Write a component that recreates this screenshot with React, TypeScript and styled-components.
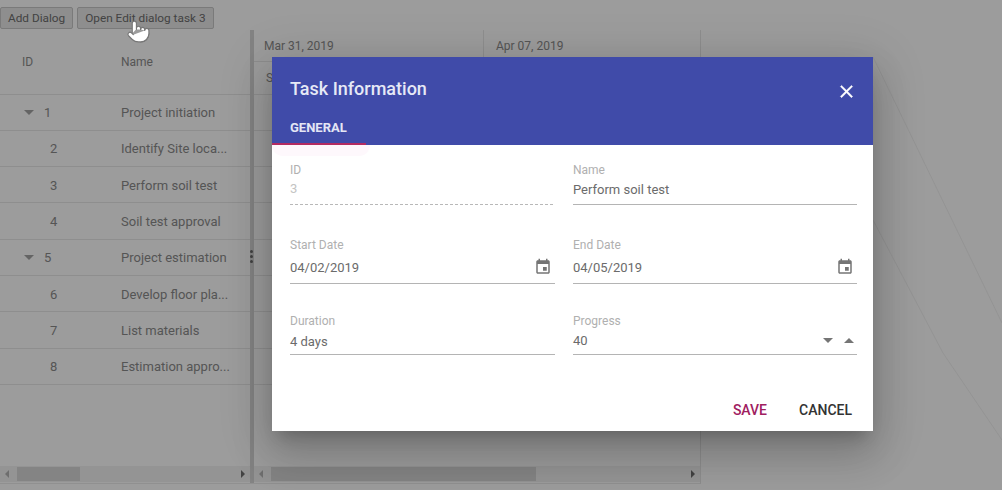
import styled, { createGlobalStyle } from 'styled-components';
import { Pointer } from 'lucide-react';

const tasks = [
  { id: 1, name: 'Project initiation', parent: true },
  { id: 2, name: 'Identify Site loca...' },
  { id: 3, name: 'Perform soil test' },
  { id: 4, name: 'Soil test approval' },
  { id: 5, name: 'Project estimation', parent: true },
  { id: 6, name: 'Develop floor pla...' },
  { id: 7, name: 'List materials' },
  { id: 8, name: 'Estimation appro...' },
];

const EventIcon = () => (
  <svg width="18" height="18" viewBox="0 0 24 24" fill="#757575">
    <path d="M17 12h-5v5h5v-5zM16 1v2H8V1H6v2H5c-1.11 0-1.99.9-1.99 2L3 19c0 1.1.89 2 2 2h14c1.1 0 2-.9 2-2V5c0-1.1-.9-2-2-2h-1V1h-2zm3 18H5V8h14v11z" />
  </svg>
);

const CloseIcon = () => (
  <svg width="21" height="21" viewBox="0 0 24 24" fill="#fff" stroke="#fff" strokeWidth="0.5">
    <path d="M19 6.41L17.59 5 12 10.59 6.41 5 5 6.41 10.59 12 5 17.59 6.41 19 12 13.41 17.59 19 19 17.59 13.41 12z" />
  </svg>
);

const Scrollbar = ({ thumbWidth }: { thumbWidth: number }) => (
  <ScrollTrack>
    <ScrollArrow $dir="left" />
    <ScrollThumb style={{ width: thumbWidth }} />
    <ScrollArrow $dir="right" />
  </ScrollTrack>
);

export default function App() {
  return (
    <Page>
      <GlobalStyle />
      <Toolbar>
        <ToolButton>Add Dialog</ToolButton>
        <ToolButton>Open Edit dialog task 3</ToolButton>
      </Toolbar>
      <Gantt>
        <GridPane>
          <GridHeader>
            <IdHeader>ID</IdHeader>
            <NameHeader>Name</NameHeader>
          </GridHeader>
          {tasks.map((t) => (
            <Row key={t.id}>
              <IdCell>
                {t.parent && <Caret />}
                <IdValue $parent={!!t.parent}>{t.id}</IdValue>
              </IdCell>
              <span>{t.name}</span>
            </Row>
          ))}
          <Filler />
          <Scrollbar thumbWidth={63} />
        </GridPane>
        <Splitter>
          <Kebab>
            <i />
            <i />
            <i />
          </Kebab>
        </Splitter>
        <ChartPane>
          <WeekRow>
            <WeekCell>Mar 31, 2019</WeekCell>
            <WeekCell>Apr 07, 2019</WeekCell>
          </WeekRow>
          <DayRow>S</DayRow>
          {tasks.map((t) => (
            <ChartRow key={t.id} />
          ))}
          <Filler />
          <Scrollbar thumbWidth={265} />
        </ChartPane>
      </Gantt>

      <Overlay>
        <Connectors viewBox="0 0 1002 490">
          <polyline points="873,57 1002,323" />
          <polyline points="873,220 903,277 943,353 1002,440" />
        </Connectors>
      </Overlay>

      <Dialog>
        <DialogHeader>
          <TitleRow>
            <Title>Task Information</Title>
            <CloseButton>
              <CloseIcon />
            </CloseButton>
          </TitleRow>
          <Tab>GENERAL</Tab>
        </DialogHeader>
        <TabRipple />
        <Form>
          <Field $height={42} $width={263}>
            <Label>ID</Label>
            <DisabledValue $lift={4}>3</DisabledValue>
          </Field>
          <Field $height={42}>
            <Label>Name</Label>
            <Value $lift={3}>Perform soil test</Value>
          </Field>
          <Field $height={46}>
            <Label>Start Date</Label>
            <Value $lift={1}>
              04/02/2019
              <EventIcon />
            </Value>
          </Field>
          <Field $height={46}>
            <Label>End Date</Label>
            <Value $lift={1}>
              04/05/2019
              <EventIcon />
            </Value>
          </Field>
          <Field $height={41}>
            <Label>Duration</Label>
            <Value>4 days</Value>
          </Field>
          <Field $height={41}>
            <Label>Progress</Label>
            <Value $lift={1}>
              40
              <Spinner>
                <Triangle $up={false} />
                <Triangle $up />
              </Spinner>
            </Value>
          </Field>
        </Form>
        <Actions>
          <ActionButton $primary>SAVE</ActionButton>
          <ActionButton>CANCEL</ActionButton>
        </Actions>
      </Dialog>

      <HandCursor>
        <Pointer size={25} fill="#fff" color="#777" strokeWidth={1.1} />
      </HandCursor>
    </Page>
  );
}

const GlobalStyle = createGlobalStyle`
  html, body {
    margin: 0;
    padding: 0;
    background: #fff;
  }
  * {
    box-sizing: border-box;
  }
`;

const Page = styled.div`
  position: relative;
  width: 1002px;
  height: 490px;
  overflow: hidden;
  background: #fff;
  font-family: Roboto, 'Liberation Sans', sans-serif;
  color: #8c8c8c;
`;

const Toolbar = styled.div`
  display: flex;
  gap: 4px;
  height: 30px;
  padding-top: 7px;
`;

const ToolButton = styled.div`
  display: flex;
  align-items: center;
  height: 22px;
  padding: 0 7px;
  background: #e8e8e8;
  border: 1px solid #c8c8c8;
  border-radius: 2px;
  font-size: 11.8px;
  color: #6e6e6e;
`;

const Gantt = styled.div`
  display: flex;
  width: 701px;
  height: 454px;
  border-right: 1px solid #e6e6e6;
  border-bottom: 1px solid #ececec;
`;

const GridPane = styled.div`
  display: flex;
  flex: none;
  flex-direction: column;
  width: 250px;
`;

const GridHeader = styled.div`
  display: flex;
  flex: none;
  align-items: center;
  height: 64.5px;
  font-size: 12px;
  border-bottom: 1px solid #e8e8e8;
`;

const IdHeader = styled.span`
  width: 121px;
  padding-left: 22px;
`;

const NameHeader = styled.span``;

const Row = styled.div`
  display: flex;
  flex: none;
  align-items: center;
  height: 36.3px;
  padding-top: 1px;
  font-size: 13px;
  border-bottom: 1px solid #e8e8e8;
`;

const IdCell = styled.div`
  display: flex;
  align-items: center;
  width: 121px;
  padding-left: 24px;
`;

const Caret = styled.span`
  width: 0;
  height: 0;
  border-left: 5px solid transparent;
  border-right: 5px solid transparent;
  border-top: 5px solid #a4a4a4;
`;

const IdValue = styled.span<{ $parent: boolean }>`
  margin-left: ${({ $parent }) => ($parent ? '10px' : '26px')};
`;

const Filler = styled.div`
  flex: 1;
`;

const ScrollTrack = styled.div`
  display: flex;
  flex: none;
  align-items: center;
  height: 16px;
  margin-bottom: 1px;
  padding: 0 5px;
  background: #f2f2f2;
`;

const ScrollArrow = styled.span<{ $dir: 'left' | 'right' }>`
  width: 0;
  height: 0;
  border-top: 4px solid transparent;
  border-bottom: 4px solid transparent;
  ${({ $dir }) =>
    $dir === 'left'
      ? 'border-right: 4px solid #b4b4b4; margin-right: 8px;'
      : 'border-left: 4px solid #6e6e6e; margin-left: auto;'}
`;

const ScrollThumb = styled.div`
  height: 14px;
  background: #d8d8d8;
`;

const Splitter = styled.div`
  position: relative;
  flex: none;
  width: 4px;
  background: #d6d6d6;
`;

const Kebab = styled.div`
  position: absolute;
  top: 220px;
  left: 0;
  display: flex;
  flex-direction: column;
  gap: 2px;
  width: 4px;

  i {
    display: block;
    width: 3px;
    height: 3px;
    border-radius: 50%;
    background: #6a6a6a;
  }
`;

const ChartPane = styled.div`
  display: flex;
  flex: 1;
  flex-direction: column;
  min-width: 0;
`;

const WeekRow = styled.div`
  display: flex;
  flex: none;
  height: 32px;
  border-bottom: 1px solid #e8e8e8;
`;

const WeekCell = styled.div`
  display: flex;
  align-items: center;
  width: 230px;
  padding-left: 10px;
  font-size: 12px;
  border-right: 1px solid #e8e8e8;

  &:last-child {
    flex: 1;
    padding-left: 12px;
    border-right: 0;
  }
`;

const DayRow = styled.div`
  display: flex;
  flex: none;
  align-items: center;
  height: 32.5px;
  padding-left: 12px;
  font-size: 12px;
  border-bottom: 1px solid #e8e8e8;
`;

const ChartRow = styled.div`
  flex: none;
  height: 36.3px;
  border-bottom: 1px solid #e8e8e8;
`;

const Overlay = styled.div`
  position: absolute;
  inset: 0;
  background: rgba(0, 0, 0, 0.39);
`;

const Connectors = styled.svg`
  position: absolute;
  inset: 0;
  width: 100%;
  height: 100%;

  polyline {
    fill: none;
    stroke: #949494;
    stroke-width: 1;
  }
`;

const Dialog = styled.div`
  position: absolute;
  top: 57px;
  left: 272px;
  width: 601px;
  height: 374px;
  background: #fff;
  box-shadow: 0 11px 15px -7px rgba(0, 0, 0, 0.2), 0 24px 38px 3px rgba(0, 0, 0, 0.14),
    0 9px 46px 8px rgba(0, 0, 0, 0.12);
`;

const DialogHeader = styled.div`
  display: flex;
  flex-direction: column;
  height: 88px;
  background: #404ba9;
  color: #fff;
`;

const TitleRow = styled.div`
  display: flex;
  align-items: center;
  justify-content: space-between;
  height: 54px;
  padding: 8px 16px 0 18px;
`;

const Title = styled.div`
  font-size: 18px;
  font-weight: 500;
  color: #e6e9f6;
`;

const CloseButton = styled.div`
  display: flex;
  margin-top: 6px;
`;

const Tab = styled.div`
  display: flex;
  align-items: center;
  width: 94px;
  height: 34px;
  padding-left: 18px;
  font-size: 13px;
  font-weight: 700;
  color: #e4e6f5;
  border-bottom: 2px solid #b32b62;
`;

const TabRipple = styled.div`
  position: absolute;
  top: 88px;
  left: 0;
  width: 98px;
  height: 11px;
  border-radius: 0 0 12px 12px;
  background: #fef8fc;
`;

const Form = styled.div`
  position: relative;
  display: grid;
  grid-template-columns: 265px 284px;
  grid-template-rows: 75px 76px auto;
  column-gap: 18px;
  padding: 18px 16px 0 18px;
`;

const Field = styled.div<{ $height: number; $width?: number }>`
  display: flex;
  flex-direction: column;
  height: ${({ $height }) => $height}px;
  width: ${({ $width }) => ($width ? `${$width}px` : '100%')};
`;

const Label = styled.div`
  font-size: 12px;
  line-height: 14px;
  color: #b0b0b0;
`;

const Value = styled.div<{ $lift?: number }>`
  display: flex;
  flex: 1;
  align-items: center;
  justify-content: space-between;
  padding-right: 3px;
  padding-bottom: ${({ $lift }) => $lift ?? 0}px;
  font-size: 13px;
  color: #6b6b6b;
  border-bottom: 1.5px solid #b4b4b4;
`;

const DisabledValue = styled(Value)`
  color: #c4c4c4;
  border-bottom: 1px dashed #b8b8b8;
`;

const Spinner = styled.div`
  display: flex;
  gap: 11px;
`;

const Triangle = styled.span<{ $up: boolean }>`
  width: 0;
  height: 0;
  border-left: 5.5px solid transparent;
  border-right: 5.5px solid transparent;
  ${({ $up }) => ($up ? 'border-bottom: 5px solid #757575;' : 'border-top: 5px solid #757575;')}
`;

const Actions = styled.div`
  display: flex;
  justify-content: flex-end;
  gap: 32px;
  margin-top: 47px;
  padding-right: 21px;
`;

const ActionButton = styled.div<{ $primary?: boolean }>`
  font-size: 14px;
  font-weight: 500;
  color: ${({ $primary }) => ($primary ? '#a0205f' : '#333')};
`;

const HandCursor = styled.div`
  position: absolute;
  top: 19px;
  left: 126px;
  display: flex;
`;
